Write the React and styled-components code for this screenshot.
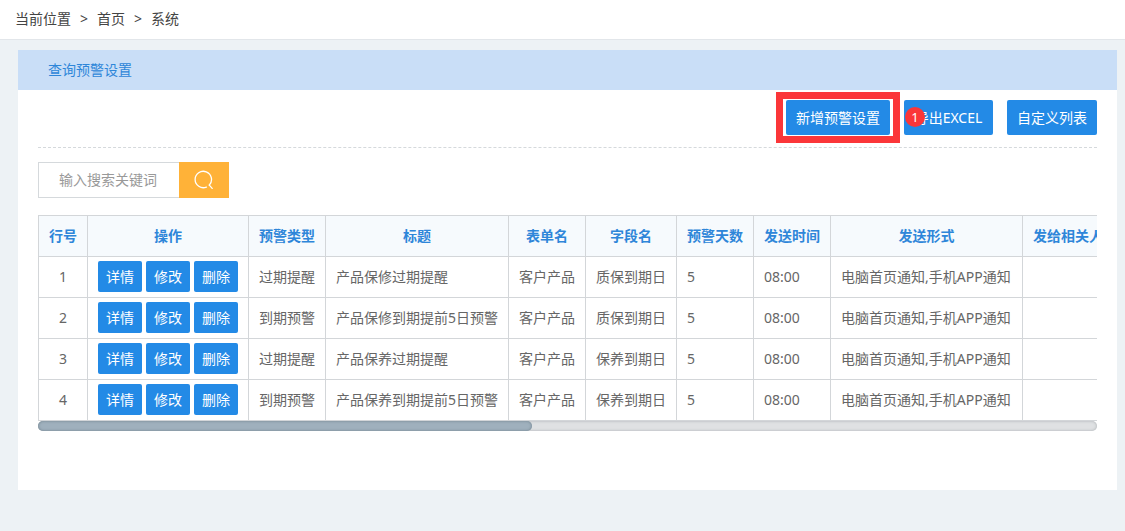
import React, { useState } from 'react';
import styled, { createGlobalStyle } from 'styled-components';

const GlobalStyle = createGlobalStyle`
  * {
    box-sizing: border-box;
  }

  body {
    margin: 0;
    background-color: #edf2f5;
    color: #666;
    font-family: "Noto Sans", "Noto Sans CJK SC", sans-serif;
    font-size: 14px;
    line-height: 20px;
  }

  button, input {
    font: inherit;
  }
`;

const Breadcrumb = styled.nav`
  display: flex;
  align-items: center;
  gap: 9px;
  height: 40px;
  padding: 0 15px 2px;
  background-color: #fff;
  border-bottom: 1px solid #e2e6ea;
  color: #444;
`;

const Crumb = styled.a`
  color: inherit;
  text-decoration: none;
`;

const Panel = styled.main`
  margin: 10px 8px 41px 18px;
  padding-bottom: 59px;
  background-color: #fff;
`;

const PanelTitle = styled.h1`
  margin: 0;
  padding: 10px 30px;
  background-color: #c9def7;
  color: #2e86d9;
  font-size: 14px;
  font-weight: 400;
`;

const PanelBody = styled.div`
  padding: 0 20px;
`;

const Toolbar = styled.div`
  display: flex;
  justify-content: flex-end;
  gap: 14px;
  padding: 10px 0 12px;
  border-bottom: 1px dashed #d5d9dc;
`;

const Button = styled.button`
  border: 0;
  border-radius: 2px;
  background-color: #238ae6;
  color: #fff;
  cursor: pointer;
  white-space: nowrap;
`;

const ToolButton = styled(Button)`
  min-width: 89px;
  height: 35px;
  padding: 0 10px;
`;

const Anchor = styled.div`
  position: relative;
  display: flex;
`;

const Highlight = styled.span`
  position: absolute;
  inset: -8px -10px;
  border: 7px solid #fb3639;
  pointer-events: none;
`;

const StepBadge = styled.span`
  position: absolute;
  top: 7px;
  left: 1px;
  width: 20px;
  height: 20px;
  border-radius: 50%;
  background-color: #fb3639;
  color: #fff;
  font-size: 13px;
  text-align: center;
`;

const SearchForm = styled.form`
  display: flex;
  height: 36px;
  margin: 14px 0 17px;
`;

const SearchInput = styled.input`
  width: 141px;
  padding: 0 20px;
  border: 1px solid #d5d9dc;
  border-right: 0;
  border-radius: 0;
  outline: none;
  color: #666;

  &::placeholder {
    color: #999;
    opacity: 1;
  }
`;

const SearchButton = styled.button`
  display: flex;
  align-items: center;
  justify-content: center;
  width: 50px;
  padding: 0;
  border: 0;
  background-color: #ffb238;
  color: #fff;
  cursor: pointer;
`;

const TableWrap = styled.div`
  overflow: hidden;
`;

const Table = styled.table`
  width: 1120px;
  table-layout: fixed;
  border-collapse: separate;
  border-spacing: 0;
  border-top: 1px solid #d3d6d9;
  border-left: 1px solid #d3d6d9;
`;

const Th = styled.th`
  height: 41px;
  padding: 0 10px;
  border-right: 1px solid #d3d6d9;
  border-bottom: 1px solid #d3d6d9;
  background-color: #f6fafd;
  color: #2e86d9;
  font-weight: 700;
  text-align: ${(props) => props.$align || 'center'};
  white-space: nowrap;
`;

const Td = styled.td`
  height: 41px;
  padding: 0 10px;
  border-right: 1px solid #d3d6d9;
  border-bottom: 1px solid #d3d6d9;
  text-align: ${(props) => props.$align || 'left'};
  white-space: nowrap;
`;

const Actions = styled.div`
  display: flex;
  gap: 4px;
  padding-bottom: 1px;
`;

const RowButton = styled(Button)`
  width: 44px;
  height: 31px;
  padding: 0;
`;

const ScrollTrack = styled.div`
  display: grid;
  grid-template-columns: 7fr 8fr;
  height: 10px;
  border-radius: 5px;
  background-color: #dfe1e3;
  box-shadow: inset 0 0 3px #a9aeb2;
`;

const ScrollThumb = styled.div`
  border-radius: 5px;
  background-color: #9fb0bd;
  box-shadow: inset 0 0 3px #6f808c;
`;

const columns = [
  { title: '行号', width: 49 },
  { title: '操作', width: 161 },
  { title: '预警类型', width: 77 },
  { title: '标题', width: 183 },
  { title: '表单名', width: 77 },
  { title: '字段名', width: 91 },
  { title: '预警天数', width: 77 },
  { title: '发送时间', width: 77 },
  { title: '发送形式', width: 192 },
  { title: '发给相关人', align: 'left' },
];

const rows = [
  { type: '过期提醒', title: '产品保修过期提醒', form: '客户产品', field: '质保到期日' },
  { type: '到期预警', title: '产品保修到期提前5日预警', form: '客户产品', field: '质保到期日' },
  { type: '过期提醒', title: '产品保养过期提醒', form: '客户产品', field: '保养到期日' },
  { type: '到期预警', title: '产品保养到期提前5日预警', form: '客户产品', field: '保养到期日' },
];

const SearchIcon = () => (
  <svg width="20" height="20" viewBox="0 0 20 20" fill="none" stroke="currentColor" strokeWidth="1.3" strokeLinecap="round" aria-hidden="true">
    <path d="M12.4 17.1A8.2 8.2 0 1 1 15.3 15.1" />
    <path d="M15.3 15.1L18.2 18.4" />
  </svg>
);

const App = () => {
  const [keyword, setKeyword] = useState('');

  return (
    <>
      <GlobalStyle />
      <Breadcrumb aria-label="当前位置">
        <span>当前位置</span>
        <span>&gt;</span>
        <Crumb href="#home">首页</Crumb>
        <span>&gt;</span>
        <Crumb href="#system">系统</Crumb>
      </Breadcrumb>

      <Panel>
        <PanelTitle>查询预警设置</PanelTitle>
        <PanelBody>
          <Toolbar>
            <Anchor>
              <ToolButton type="button">新增预警设置</ToolButton>
              <Highlight />
            </Anchor>
            <Anchor>
              <ToolButton type="button">导出EXCEL</ToolButton>
              <StepBadge>1</StepBadge>
            </Anchor>
            <ToolButton type="button">自定义列表</ToolButton>
          </Toolbar>

          <SearchForm onSubmit={(e) => e.preventDefault()}>
            <SearchInput
              type="text"
              aria-label="输入搜索关键词"
              placeholder="输入搜索关键词"
              value={keyword}
              onChange={(e) => setKeyword(e.target.value)}
            />
            <SearchButton type="submit" aria-label="搜索">
              <SearchIcon />
            </SearchButton>
          </SearchForm>

          <TableWrap>
            <Table>
              <colgroup>
                {columns.map((col) => (
                  <col key={col.title} width={col.width} />
                ))}
              </colgroup>
              <thead>
                <tr>
                  {columns.map((col) => (
                    <Th key={col.title} $align={col.align}>{col.title}</Th>
                  ))}
                </tr>
              </thead>
              <tbody>
                {rows.map((row, index) => (
                  <tr key={index}>
                    <Td $align="center">{index + 1}</Td>
                    <Td>
                      <Actions>
                        <RowButton type="button">详情</RowButton>
                        <RowButton type="button">修改</RowButton>
                        <RowButton type="button">删除</RowButton>
                      </Actions>
                    </Td>
                    <Td>{row.type}</Td>
                    <Td>{row.title}</Td>
                    <Td>{row.form}</Td>
                    <Td>{row.field}</Td>
                    <Td>5</Td>
                    <Td>08:00</Td>
                    <Td>电脑首页通知,手机APP通知</Td>
                    <Td />
                  </tr>
                ))}
              </tbody>
            </Table>
          </TableWrap>
          <ScrollTrack>
            <ScrollThumb />
          </ScrollTrack>
        </PanelBody>
      </Panel>
    </>
  );
};

export default App;
